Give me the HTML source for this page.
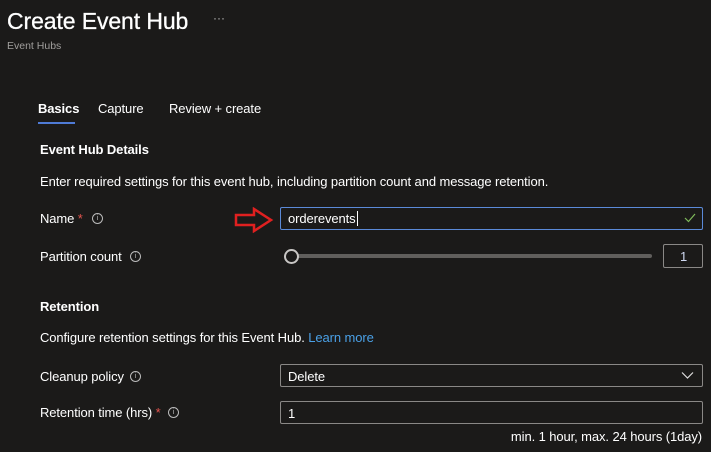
<!DOCTYPE html>
<html><head><meta charset="utf-8"><style>
body{margin:0;width:711px;height:452px;background:#1b1a19;font-family:"Liberation Sans",sans-serif;color:#fff;position:relative;overflow:hidden}
.a{position:absolute;white-space:nowrap}
.t{font-size:13px;letter-spacing:-0.1px}
.b{font-weight:bold}
.i{position:absolute;width:9px;height:9px;border:1px solid #bbb;border-radius:50%;font-size:7px;color:#bbb;text-align:center;line-height:9px}
.box{position:absolute;border:1px solid #8a8886;border-radius:2px;box-sizing:border-box}
.star{color:#e5554f}
</style></head><body>
<div class="a" style="left:7px;top:8px;font-size:23px;letter-spacing:-0.1px;-webkit-text-stroke:0.3px #fff">Create Event Hub</div>
<div class="a" style="left:213px;top:11px;font-size:12px;color:#bbb">···</div>
<div class="a" style="left:7px;top:40px;font-size:10.5px;color:#a19f9d">Event Hubs</div>
<div class="a t b" style="left:38px;top:101px">Basics</div>
<div class="a t" style="left:98px;top:101px">Capture</div>
<div class="a t" style="left:169px;top:101px">Review + create</div>
<div class="a" style="left:38px;top:122px;width:37px;height:2px;background:#4f7bd6"></div>
<div class="a t b" style="left:40px;top:142px">Event Hub Details</div>
<div class="a t" style="left:40px;top:174px">Enter required settings for this event hub, including partition count and message retention.</div>
<div class="a t" style="left:40px;top:211px">Name <span class="star">*</span></div>
<div class="i" style="left:92px;top:213px">i</div>
<svg class="a" style="left:234px;top:207px" width="40" height="26"><path d="M2 8 H20 V2 L37 13 L20 24 V18 H2 Z" fill="none" stroke="#e02020" stroke-width="2.5"/></svg>
<div class="box" style="left:280px;top:207px;width:423px;height:23px;border-color:#5b8ad8"></div>
<div class="a t" style="left:288px;top:211px">orderevents<span style="border-left:1px solid #fff;margin-left:1px"></span></div>
<svg class="a" style="left:684px;top:212px" width="12" height="12"><path d="M1 6 L4.5 9.5 L11 2" fill="none" stroke="#7fba5a" stroke-width="1.2"/></svg>
<div class="a t" style="left:40px;top:249px">Partition count</div>
<div class="i" style="left:130px;top:251px">i</div>
<div class="a" style="left:291px;top:254px;width:361px;height:4px;background:#605e5c;border-radius:2px"></div>
<div class="a" style="left:284px;top:249px;width:11px;height:11px;border:2px solid #c8c6c4;border-radius:50%;background:#1b1a19"></div>
<div class="box" style="left:663px;top:244px;width:40px;height:24px"></div>
<div class="a t" style="left:680px;top:249px;color:#cfd8f0">1</div>
<div class="a t b" style="left:40px;top:299px">Retention</div>
<div class="a t" style="left:40px;top:330px">Configure retention settings for this Event Hub. <span style="color:#4aa0e6">Learn more</span></div>
<div class="a t" style="left:40px;top:369px">Cleanup policy</div>
<div class="i" style="left:130px;top:371px">i</div>
<div class="box" style="left:280px;top:364px;width:423px;height:23px"></div>
<div class="a t" style="left:288px;top:369px">Delete</div>
<svg class="a" style="left:681px;top:371px" width="13" height="9"><path d="M1 1.5 L6.5 7 L12 1.5" fill="none" stroke="#ddd" stroke-width="1.2"/></svg>
<div class="a t" style="left:40px;top:405px">Retention time (hrs) <span class="star">*</span></div>
<div class="i" style="left:168px;top:407px">i</div>
<div class="box" style="left:280px;top:401px;width:423px;height:23px"></div>
<div class="a t" style="left:288px;top:406px">1</div>
<div class="a t" style="right:9px;top:429px">min. 1 hour, max. 24 hours (1day)</div>
</body></html>
